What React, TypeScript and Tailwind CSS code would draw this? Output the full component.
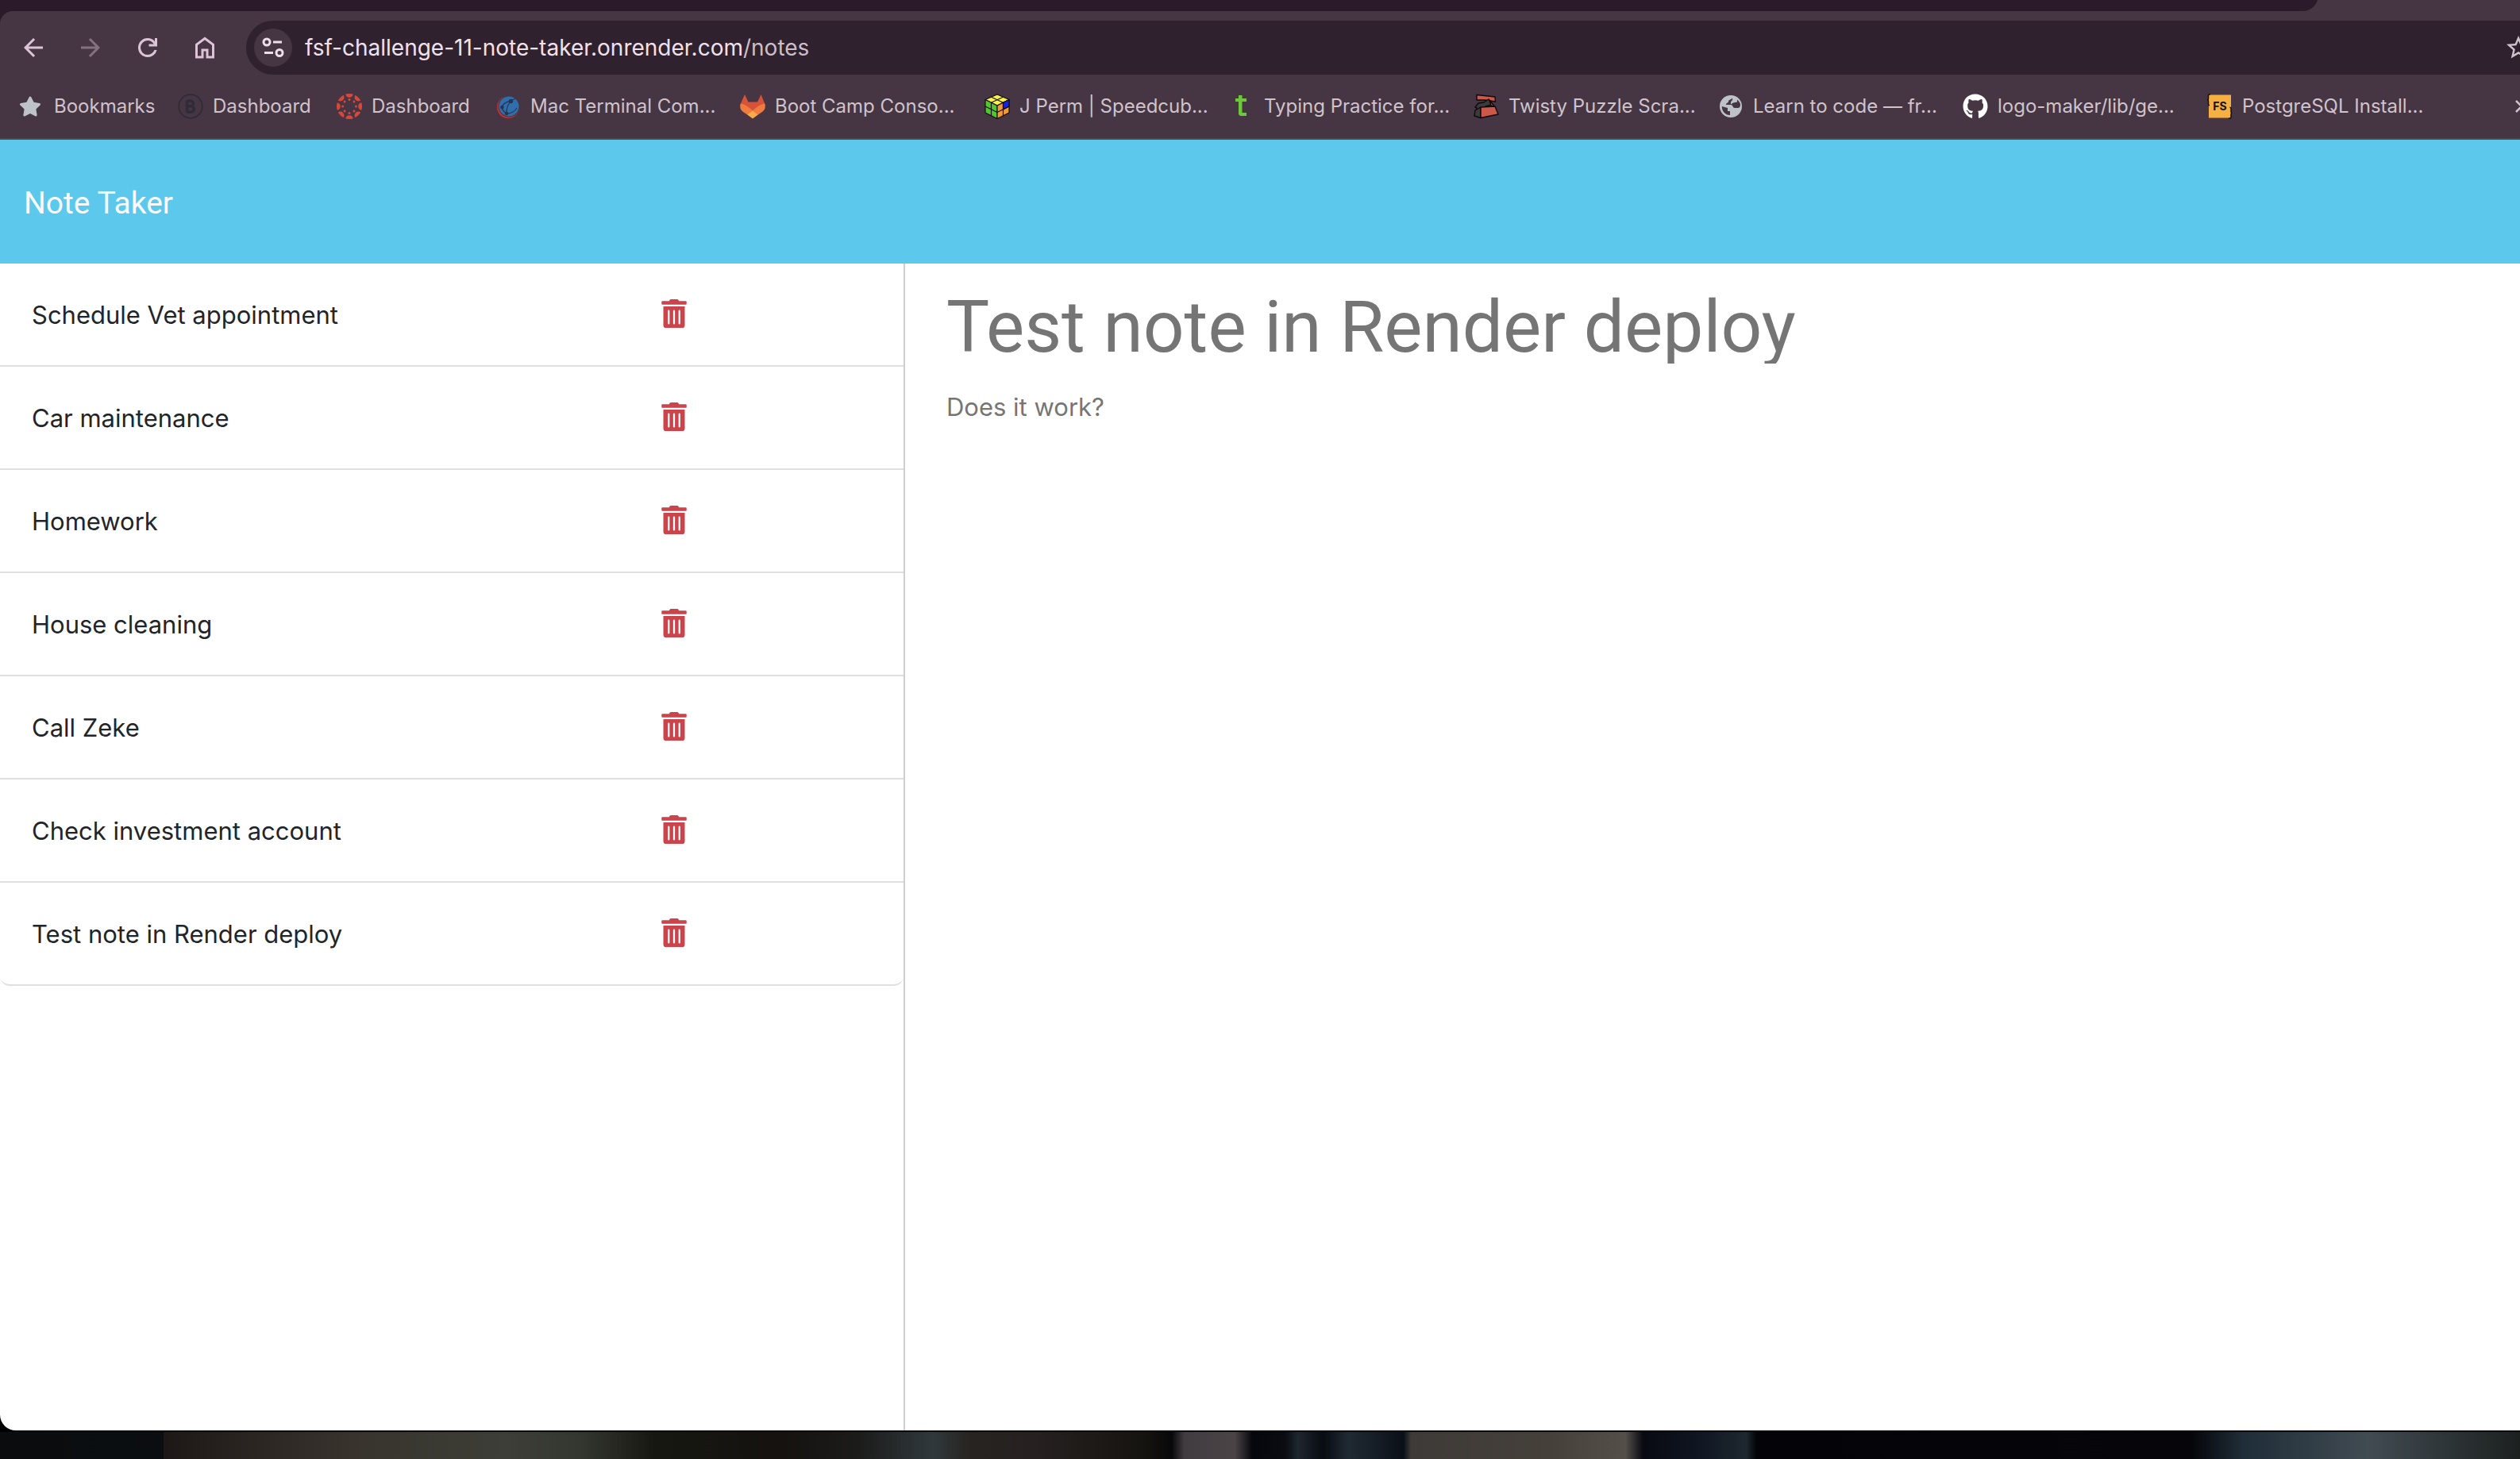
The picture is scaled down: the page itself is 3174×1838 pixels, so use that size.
import { useState } from "react";
import type { ReactNode } from "react";
import { FaGithub, FaStar, FaTrashAlt } from "react-icons/fa";
import { MdArrowBack, MdArrowForward, MdStarBorder } from "react-icons/md";

type Note = { title: string; text: string };
type Bookmark = { label: string; icon: ReactNode; short?: boolean };

const notes: Note[] = [
  { title: "Schedule Vet appointment", text: "" },
  { title: "Car maintenance", text: "" },
  { title: "Homework", text: "" },
  { title: "House cleaning", text: "" },
  { title: "Call Zeke", text: "" },
  { title: "Check investment account", text: "" },
  { title: "Test note in Render deploy", text: "Does it work?" },
];

const ANGLES = [0, 45, 90, 135, 180, 225, 270, 315];

function ReloadIcon() {
  return (
    <svg viewBox="0 0 24 24" className="size-9" fill="currentColor" aria-hidden="true">
      <path d="M12 20q-3.35 0-5.675-2.325T4 12q0-3.35 2.325-5.675T12 4q1.725 0 3.3.713T18 6.75V4h2v7h-7V9h4.2q-.8-1.4-2.187-2.2T12 6Q9.5 6 7.75 7.75T6 12q0 2.5 1.75 4.25T12 18q1.925 0 3.475-1.1T17.65 14h2.1q-.7 2.65-2.85 4.325T12 20Z" />
    </svg>
  );
}

function HomeIcon() {
  return (
    <svg viewBox="0 0 24 24" className="size-9" fill="currentColor" aria-hidden="true">
      <path d="M6 19h3v-6h6v6h3v-9l-6-4.5L6 10v9Zm-2 2V9l8-6 8 6v12h-7v-6h-2v6H4Z" />
    </svg>
  );
}

function TuneIcon() {
  return (
    <svg viewBox="0 0 32 32" className="size-8" fill="none" stroke="currentColor" strokeWidth="3" aria-hidden="true">
      <circle cx="8" cy="9" r="4" />
      <path d="M16 9h11M5 22.500h11" />
      <circle cx="24" cy="22.500" r="4" />
    </svg>
  );
}

function BootcampIcon() {
  return (
    <svg viewBox="0 0 32 32" className="size-8" fill="none" stroke="#2f2c38" aria-hidden="true">
      <circle cx="16" cy="16" r="14.800" strokeWidth="1.800" />
      <path d="M11.500 8.500v15M11.500 9h4.500a3.300 3.300 0 0 1 0 6.800h-4M11.500 15.800h5a3.700 3.700 0 0 1 0 7.400h-5" strokeWidth="3.400" />
    </svg>
  );
}

function CanvasIcon() {
  return (
    <svg viewBox="0 0 32 32" className="size-8" fill="#d9473a" aria-hidden="true">
      <defs>
        <clipPath id="canvas-disc">
          <circle cx="16" cy="16" r="16" />
        </clipPath>
      </defs>
      <g clipPath="url(#canvas-disc)">
        {ANGLES.map((a) => (
          <g key={a} transform={`rotate(${a} 16 16)`}>
            <circle cx="16" cy="0" r="4.800" />
            <circle cx="16" cy="7.600" r="1.500" />
          </g>
        ))}
      </g>
    </svg>
  );
}

function NetworkIcon() {
  return (
    <svg viewBox="0 0 32 32" className="size-8" aria-hidden="true">
      <ellipse cx="16" cy="17" rx="14" ry="14" fill="#c9302f" />
      <circle cx="17" cy="16" r="13.500" fill="#463543" />
      <circle cx="17" cy="16" r="12.500" fill="#2f6fae" />
      <path d="M20 9c-6 1-11 4-12 9 1 3 3 5 6 7 0-6 1-12 6-16M14 25c5 0 10-2 13-7M20 9l5-3" fill="none" stroke="#2b3a5c" strokeWidth="1.400" />
      <g fill="#2b3350">
        <circle cx="19.500" cy="9.500" r="2.700" />
        <circle cx="8.500" cy="17" r="2.300" />
        <circle cx="14" cy="25" r="2.300" />
      </g>
    </svg>
  );
}

function GitlabIcon() {
  return (
    <svg viewBox="0 0 32 32" className="size-8" aria-hidden="true">
      <path d="M6 1 0 14.500 16 31 32 14.500 26.500 1 22 10.500H10.500Z" fill="#d6533a" />
      <path d="M1 12.500a9 9 0 0 0 3 10.500L16 31l12-8a9 9 0 0 0 3-10.500c-6 1-11 5-15 9-4-4-9-8-15-9Z" fill="#f07b3f" />
      <path d="M16 21.500 9.500 26.500 16 31.500l6.500-5Z" fill="#f6ab4b" />
    </svg>
  );
}

function CubeIcon() {
  return (
    <svg viewBox="0 0 32 32" className="size-8" stroke="#111" strokeWidth="1.200" strokeLinejoin="round" aria-hidden="true">
      <path d="M16 1 31 7.500 16 15 1 7.500Z" fill="#fdf04a" />
      <path d="M1 7.500 16 15v16.500L1 24Z" fill="#55c52f" />
      <path d="M31 7.500 16 15v16.500L31 24Z" fill="#f39a35" />
      <path d="M31 7.500 23.500 11.200v8.800L31 16Z" fill="#1420e6" />
      <path d="M8.500 4.200 23.500 11.200V28M23.500 4.200 8.500 11.200V28M1 16l15 7.500L31 16" fill="none" />
    </svg>
  );
}

function TypingIcon() {
  return (
    <svg viewBox="0 0 32 32" className="size-8" fill="#6cc93c" aria-hidden="true">
      <path d="M12 2h4.500v4H22v4h-5.500v14H22v4h-8l-2-2V10H8V6h4Z" />
    </svg>
  );
}

function PuzzleIcon() {
  return (
    <svg viewBox="0 0 32 32" className="size-8" stroke="#0d0b0c" strokeWidth="1.400" strokeLinejoin="round" aria-hidden="true">
      <path d="M4 1.500 27 4l.500 6L14 8 4 8Z" fill="#cb5849" />
      <path d="M13 11 19 7l4 7-8 2-7 4-2 8-4-1 2-9-2-1 4-5Z" fill="#3c3a3b" />
      <path d="M20 8 27 17l-5-2Z" fill="#cb5849" />
      <path d="M9 17 2 21 1 28 9 30.500Z" fill="#3c3a3b" />
      <path d="M9 17 27 16 31 26 9 30.500Z" fill="#cb5849" />
    </svg>
  );
}

function GlobeIcon() {
  return (
    <svg viewBox="0 0 32 32" className="size-8" aria-hidden="true">
      <circle cx="16" cy="16" r="14" fill="#bec3c9" />
      <path d="M17 5c-1 3-5 2-5 5 0 2-3 1-3 4h6c3 0 2 4 5 4h4c3 0 3-3 3-5-1-3-3-5-6-7-1 3-4 3-4 0Z" fill="#463543" transform="translate(1 0)" />
      <path d="M20 5.500h4v5l-5 1-3 2v-3Z" fill="#bec3c9" />
      <path d="M4.800 16 12 18v4h3v5C9 27 4.500 22 4.800 16Z" fill="#463543" />
    </svg>
  );
}

function FullStackIcon() {
  return (
    <span className="relative flex h-8 w-8 items-center justify-center" aria-hidden="true">
      <svg viewBox="0 0 32 32" className="absolute size-8" fill="none">
        <rect x="2" y="1.500" width="28" height="29" fill="#f5b041" />
        <path d="M4 .800H3q-1.500 0-1.500 2v3q0 2-1.500 2 1.500 0 1.500 2v3q0 2 1.500 2M27 31.200h1q2 0 2-2v-3q0-2 1.500-2-1.500 0-1.500-2v-3q0-2-1.500-2" stroke="#15110c" strokeWidth="1.500" />
      </svg>
      <span className="relative text-[14px] font-bold leading-none text-[#15110c]">FS</span>
    </span>
  );
}

const bookmarks: Bookmark[] = [
  { label: "Bookmarks", icon: <FaStar className="size-7 text-[#bec3c9]" />, short: true },
  { label: "Dashboard", icon: <BootcampIcon />, short: true },
  { label: "Dashboard", icon: <CanvasIcon />, short: true },
  { label: "Mac Terminal Com...", icon: <NetworkIcon /> },
  { label: "Boot Camp Conso...", icon: <GitlabIcon /> },
  { label: "J Perm | Speedcub...", icon: <CubeIcon /> },
  { label: "Typing Practice for...", icon: <TypingIcon /> },
  { label: "Twisty Puzzle Scra...", icon: <PuzzleIcon /> },
  { label: "Learn to code — fr...", icon: <GlobeIcon /> },
  { label: "logo-maker/lib/ge...", icon: <FaGithub className="size-8 text-white" /> },
  { label: "PostgreSQL Install...", icon: <FullStackIcon /> },
];

function NavButton({ label, children, disabled }: { label: string; children: ReactNode; disabled?: boolean }) {
  return (
    <button
      type="button"
      aria-label={label}
      disabled={disabled}
      className="flex size-14 shrink-0 items-center justify-center rounded-full text-[#dcc3d8] disabled:text-[#86717f]"
    >
      {children}
    </button>
  );
}

function BrowserChrome() {
  return (
    <div className="overflow-hidden bg-[#2b1b2a]">
      <div className="flex h-[14px] items-end overflow-hidden bg-[#463543]">
        <div className="h-10 w-[92%] shrink-0 rounded-br-[20px] bg-[#2b1b2a]" />
      </div>
      <div className="rounded-tl-[16px] border-b-2 border-[#524749] bg-[#463543]">
        <div className="flex items-center pt-3 pl-[14px]">
          <div className="flex gap-4">
            <NavButton label="Back">
              <MdArrowBack className="size-9" />
            </NavButton>
            <NavButton label="Forward" disabled>
              <MdArrowForward className="size-9" />
            </NavButton>
            <NavButton label="Reload">
              <ReloadIcon />
            </NavButton>
            <NavButton label="Home">
              <HomeIcon />
            </NavButton>
          </div>
          <div className="ml-6 flex h-[68px] min-w-0 flex-1 items-center overflow-hidden rounded-l-full bg-[#30212f] pl-[10px]">
            <button
              type="button"
              aria-label="View site information"
              className="flex size-12 shrink-0 items-center justify-center rounded-full bg-[#463543] text-[#ecdfe9]"
            >
              <TuneIcon />
            </button>
            <p className="ml-4 flex-1 truncate text-[28px] leading-9 text-[#f0e2ec]">
              fsf-challenge-11-note-taker.onrender.com<span className="text-[#cdbfc9]">/notes</span>
            </p>
            <button type="button" aria-label="Bookmark this page" className="-mr-4 shrink-0 text-[#cfc3cc]">
              <MdStarBorder className="size-9" />
            </button>
          </div>
        </div>
        <nav aria-label="Bookmarks bar" className="flex h-20 items-center gap-8 overflow-hidden pl-6">
          {bookmarks.map((b, i) => (
            <a
              key={i}
              href="#"
              className={
                b.short
                  ? "flex w-[168px] shrink-0 items-center gap-3 text-2xl whitespace-nowrap text-[#cfc3cc]"
                  : "flex w-[276px] shrink-0 items-center gap-3 text-2xl whitespace-nowrap text-[#cfc3cc]"
              }
            >
              <span className="flex w-8 shrink-0">{b.icon}</span>
              {b.label}
            </a>
          ))}
          <button type="button" aria-label="More bookmarks" className="-mr-4 ml-auto shrink-0 text-[#cfc3cc]">
            <svg viewBox="0 0 22 22" className="size-[22px]" fill="none" stroke="currentColor" strokeWidth="2.500" aria-hidden="true">
              <path d="m1 4 7 7-7 7M11 4l7 7-7 7" />
            </svg>
          </button>
        </nav>
      </div>
    </div>
  );
}

export default function App() {
  const [items, setItems] = useState(notes);
  const [active, setActive] = useState(notes[notes.length - 1]);

  return (
    <div className="flex min-h-screen flex-col bg-black font-[Inter,sans-serif]">
      <div className="flex flex-1 flex-col overflow-hidden rounded-bl-[20px] bg-white">
        <BrowserChrome />
        <header className="flex h-[156px] items-center bg-[#5bc8ec] px-[30px] pt-1">
          <a href="/" className="font-[Roboto,sans-serif] text-[39px] leading-[60px] text-[#f8f9fa]">
            Note Taker
          </a>
        </header>
        <main className="flex flex-1">
          <aside className="w-[1140px] shrink-0 border-r-2 border-[#cfcfcf]">
            <ul className="overflow-hidden rounded-b-xl">
              {items.map((note) => (
                <li
                  key={note.title}
                  className="flex h-[130px] items-start justify-between border-b-2 border-[#dfdfdf] pt-[41px] pr-[273px] pl-10 last:rounded-b-xl"
                >
                  <button
                    type="button"
                    onClick={() => setActive(note)}
                    className="text-left text-[31px] leading-[48px] text-[#212529]"
                  >
                    {note.title}
                  </button>
                  <button
                    type="button"
                    aria-label={`Delete ${note.title}`}
                    onClick={() => setItems(items.filter((n) => n !== note))}
                    className="mt-1 text-[#cc444b]"
                  >
                    <FaTrashAlt className="h-9 w-8" />
                  </button>
                </li>
              ))}
            </ul>
          </aside>
          <section className="flex min-w-0 flex-1 flex-col px-[52px] pt-[34px]">
            <input
              aria-label="Note title"
              readOnly
              value={active.title}
              className="h-[92px] w-full font-[Roboto,sans-serif] text-[91px] leading-[92px] text-[#757575] outline-none"
            />
            <textarea
              aria-label="Note text"
              readOnly
              value={active.text}
              className="mt-[31px] w-full flex-1 resize-none text-[31px] leading-[48px] text-[#757575] outline-none"
            />
          </section>
        </main>
      </div>
      <div className="mt-0.5 h-[34px] shrink-0 bg-[linear-gradient(90deg,#0a0c0e_0%,#0b0e10_6.500%,#1d1817_6.500%,#2a2521_10%,#38332d_14%,#3c3e37_20%,#34372f_23%,#161711_26%,#15120f_31%,#1b1b1a_34%,#30383c_37%,#272320_38.500%,#262120_41%,#15130f_45.500%,#08080a_46.500%,#413c40_47%,#4a4446_49%,#05070c_49.700%,#0a0c12_51%,#1e262e_51.500%,#080b12_52.500%,#202a33_53.500%,#0b1018_55.700%,#3e3a37_56%,#45403a_61.500%,#554f4a_64.500%,#080a12_65.200%,#101622_67.500%,#1e2830_69.300%,#040408_69.700%,#06060a_87%,#1f2d38_89%,#414b52_94%,#1c201f_100%)]" />
    </div>
  );
}
